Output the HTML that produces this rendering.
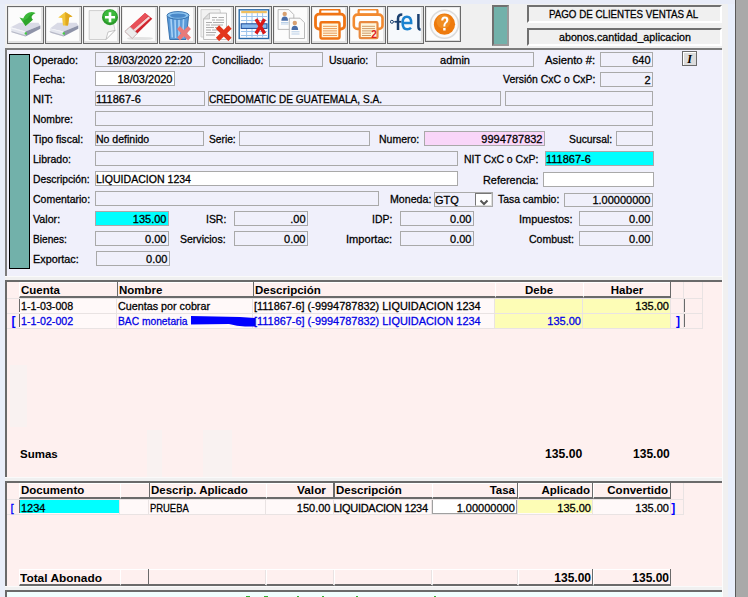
<!DOCTYPE html><html><head><meta charset="utf-8"><style>
html,body{margin:0;padding:0;}
body{width:748px;height:597px;position:relative;overflow:hidden;background:#e9eef9;font-family:"Liberation Sans",sans-serif;color:#000;}
div{box-sizing:content-box;}
</style></head><body>
<div style="position:absolute;left:722px;top:0px;width:6px;height:597px;background:#f0f0f0;"></div>
<div style="position:absolute;left:722px;top:50px;width:1px;height:547px;background:#fcfcfc;"></div>
<div style="position:absolute;left:728px;top:0px;width:7px;height:597px;background:#e9effc;"></div>
<div style="position:absolute;left:735px;top:0px;width:1px;height:597px;background:#5a5a5a;"></div>
<div style="position:absolute;left:736px;top:0px;width:12px;height:597px;background:#a9a9a9;"></div>
<div style="position:absolute;left:0px;top:0px;width:735px;height:4px;background:#e8ecf8;"></div>
<div style="position:absolute;left:5px;top:4px;width:717px;height:44px;background:#f0f0f0;"></div>
<div style="position:absolute;left:7px;top:6px;width:35px;height:36px;border:1px solid #6a6a6a;background:#fcfcfc;box-shadow:inset -2px -2px 0 #e2e2e2, inset 1px 1px 0 #ececec;"></div>
<svg style="position:absolute;left:10px;top:9px" width="32" height="32" viewBox="0 0 32 32"><path d="M0.7 18.2 L9.5 13.8 L28.5 13.8 L30.3 16.4 L15.5 22.4 Z" fill="#d9dae6"/>
<path d="M0.7 18.2 L15.5 22.4 L15.5 27.6 L1.6 23.3 Z" fill="#e4e6ee"/>
<path d="M0.7 18.2 L15.5 22.4 L15.5 23.6 L0.9 19.5 Z" fill="#f6f6fa"/>
<path d="M15.5 22.4 L30.3 16.4 L30.3 19.7 L15.5 27.6 Z" fill="#8e93a8"/>
<path d="M1.6 23.3 L15.5 27.6 L15.5 26.3 L1.4 22 Z" fill="#b8bac8"/>
<circle cx="15.8" cy="24.4" r="1.2" fill="#40d040"/><path d="M15.5 17 L9.5 8.5 L13.2 9.6 Q15 5 19 3.5 Q22 2.5 25.5 4 Q22.5 5 21.5 7.5 Q21 9 22.8 10.8 Z" fill="#3cb83a"/>
<path d="M15.5 17 L13 12 L18 9 Q19 6 23 4.5 L25.5 4 Q22.5 5 21.5 7.5 Q21 9 22.8 10.8 Z" fill="#22961e" opacity="0.6"/></svg>
<div style="position:absolute;left:45px;top:6px;width:35px;height:36px;border:1px solid #6a6a6a;background:#fcfcfc;box-shadow:inset -2px -2px 0 #e2e2e2, inset 1px 1px 0 #ececec;"></div>
<svg style="position:absolute;left:48px;top:9px" width="32" height="32" viewBox="0 0 32 32"><path d="M2 19.4 L9.5 13.8 L28.5 13.8 L30.3 16.4 L15.5 22.4 Z" fill="#d9dae6"/>
<path d="M2 19.4 L15.5 22.4 L15.5 27.6 L2.6 23.8 Z" fill="#e4e6ee"/>
<path d="M2 19.4 L15.5 22.4 L15.5 23.6 L0.9 19.5 Z" fill="#f6f6fa"/>
<path d="M15.5 22.4 L30.3 16.4 L30.3 19.7 L15.5 27.6 Z" fill="#8e93a8"/>
<path d="M2.6 23.8 L15.5 27.6 L15.5 26.3 L1.4 22 Z" fill="#b8bac8"/>
<circle cx="15.8" cy="24.4" r="1.2" fill="#40d040"/><path d="M17.3 3 L24.5 7.4 L21.2 8.2 L20 16.5 L15 16.5 L14.2 9 L10.2 8.6 Z" fill="#f2c53a"/>
<path d="M17.3 3 L24.5 7.4 L21.2 8.2 L20 16.5 L17.5 16.5 L17.3 8 Z" fill="#e0a820"/></svg>
<div style="position:absolute;left:83px;top:6px;width:35px;height:36px;border:1px solid #6a6a6a;background:#fcfcfc;box-shadow:inset -2px -2px 0 #e2e2e2, inset 1px 1px 0 #ececec;"></div>
<svg style="position:absolute;left:86px;top:9px" width="32" height="32" viewBox="0 0 32 32"><path d="M3.2 1.6 L25 1.6 L29 21.4 L20 30.5 L3.2 30.5 Z" fill="#f2f2f2" stroke="#c4c4c4" stroke-width="0.8"/>
<path d="M20 30.5 L22 23 L29 21.4 Z" fill="#fff" stroke="#b0b0b0" stroke-width="0.7"/>
<circle cx="24" cy="8.2" r="8" fill="#2a9a2a"/>
<circle cx="24" cy="7.2" r="6.5" fill="#3cb83c"/>
<path d="M24 3.2 V13.2 M19 8.2 H29" stroke="#fff" stroke-width="2.6"/></svg>
<div style="position:absolute;left:121px;top:6px;width:35px;height:36px;border:1px solid #6a6a6a;background:#fcfcfc;box-shadow:inset -2px -2px 0 #e2e2e2, inset 1px 1px 0 #ececec;"></div>
<svg style="position:absolute;left:124px;top:9px" width="32" height="32" viewBox="0 0 32 32"><ellipse cx="16" cy="29.5" rx="13" ry="1.6" fill="#e2e2e2"/>
<path d="M0.8 22.5 L21 4 L28.3 9.8 L8.2 29.5 Z" fill="#d0242c"/>
<path d="M3.5 20 L21 4 L24.5 6.8 L6.5 23.6 Z" fill="#e85058"/>
<path d="M6 23.8 L24.5 7.5 L26.2 9 L7.6 25.6 Z" fill="#f4d8d8"/>
<path d="M0.8 22.5 L6 17.8 L13.3 24.5 L8.2 29.5 Z" fill="#ececec" stroke="#b8b8b8" stroke-width="0.7"/></svg>
<div style="position:absolute;left:159px;top:6px;width:35px;height:36px;border:1px solid #6a6a6a;background:#fcfcfc;box-shadow:inset -2px -2px 0 #e2e2e2, inset 1px 1px 0 #ececec;"></div>
<svg style="position:absolute;left:162px;top:9px" width="32" height="32" viewBox="0 0 32 32"><path d="M5.2 7.2 L26.6 7.2 L24 30.5 L7.8 30.5 Z" fill="#5a9ad8" stroke="#2f6aa8" stroke-width="0.9"/>
<path d="M9 10 L10.3 28.5 M13 10.5 L13.6 29 M17 10.5 L17 29 M21.5 10 L20.8 28.5" stroke="#a8d2f6" stroke-width="1.6"/>
<ellipse cx="16" cy="6.4" rx="11" ry="3.8" fill="#8cc4f0" stroke="#2f6aa8" stroke-width="0.9"/>
<ellipse cx="16" cy="6.6" rx="8" ry="2.2" fill="#4a88c8"/>
<path d="M16.5 18.5 L27.5 30 M27.5 18.5 L16.5 30" stroke="#e87a78" stroke-width="4"/></svg>
<div style="position:absolute;left:197px;top:6px;width:35px;height:36px;border:1px solid #6a6a6a;background:#fcfcfc;box-shadow:inset -2px -2px 0 #e2e2e2, inset 1px 1px 0 #ececec;"></div>
<svg style="position:absolute;left:200px;top:9px" width="32" height="32" viewBox="0 0 32 32"><path d="M1 0.6 L20 0.6 L23 28 L1 28 Z" fill="#f2f2f2" stroke="#c8c8c8" stroke-width="0.8"/>
<path d="M9.5 4.1 L26.5 4.1 L26.5 30.5 L3.6 30.5 L3.6 10 Z" fill="#fbfbfb" stroke="#b0b0b0" stroke-width="0.8"/>
<path d="M3.6 10 L9.5 10 L9.5 4.1 Z" fill="#e0e0e0" stroke="#b0b0b0" stroke-width="0.6"/>
<path d="M12 8.5 H17 M18.5 8.5 H24 M12 11 H15 M16 11 H24 M6 13.5 H12 M13 13.5 H24 M6 16 H10 M11 16 H23 M6 18.5 H14 M15 18.5 H20 M6 21 H11 M12 21 H18 M6 23.5 H16 M6 26 H15" stroke="#9a9a9a" stroke-width="0.8"/>
<path d="M17.5 18 L30 30.5 M30 18 L17.5 30.5" stroke="#e2361c" stroke-width="4.6"/></svg>
<div style="position:absolute;left:235px;top:6px;width:35px;height:36px;border:1px solid #6a6a6a;background:#fcfcfc;box-shadow:inset -2px -2px 0 #e2e2e2, inset 1px 1px 0 #ececec;"></div>
<svg style="position:absolute;left:238px;top:9px" width="32" height="32" viewBox="0 0 32 32"><rect x="1.2" y="0.8" width="29.4" height="28.7" fill="#fafcff" stroke="#2a6aa8" stroke-width="1.4"/>
<rect x="3.2" y="2" width="25.6" height="2.2" fill="#f0c060"/>
<path d="M3 7.5 H29 M3 11.5 H29 M3 22.5 H29 M3 26.5 H29 M8.6 4 V28.5 M14 4 V28.5 M19.4 4 V28.5 M24.6 4 V28.5" stroke="#9cc4ec" stroke-width="1"/>
<rect x="3.2" y="14.8" width="25.8" height="4.6" fill="#88b8ee" stroke="#1a4a98" stroke-width="1"/>
<path d="M18 10.2 L26.6 24.5 M26.6 10.2 L18 24.5" stroke="#d81818" stroke-width="3.4"/></svg>
<div style="position:absolute;left:273px;top:6px;width:35px;height:36px;border:1px solid #6a6a6a;background:#fcfcfc;box-shadow:inset -2px -2px 0 #e2e2e2, inset 1px 1px 0 #ececec;"></div>
<svg style="position:absolute;left:276px;top:9px" width="32" height="32" viewBox="0 0 32 32"><path d="M2.1 0.6 L12.8 0.6 L17.8 5.6 L17.8 20.4 L2.1 20.4 Z" fill="#fcfcfc" stroke="#a8a8a8" stroke-width="0.8"/>
<circle cx="8.7" cy="4.9" r="2.2" fill="#d8a070"/>
<path d="M5.4 11.8 Q5.4 7.6 8.7 7.6 Q12 7.6 12 11.8 Z" fill="#4a6ea8"/>
<path d="M5 13.5 H12.5 M5 15 H12.5" stroke="#8ab0d8" stroke-width="0.6"/>
<path d="M13.3 9.2 L24 9.2 L28.5 13.7 L28.5 29.5 L13.3 29.5 Z" fill="#fcfcfc" stroke="#a8a8a8" stroke-width="0.8"/>
<circle cx="18.8" cy="14" r="2.2" fill="#d8a070"/>
<path d="M15.5 20.9 Q15.5 16.7 18.8 16.7 Q22.1 16.7 22.1 20.9 Z" fill="#4a6ea8"/>
<path d="M15.5 22.8 H23.5 M15.5 25 H23.5" stroke="#8ab0d8" stroke-width="0.6"/></svg>
<div style="position:absolute;left:311px;top:6px;width:35px;height:36px;border:1px solid #6a6a6a;background:#fcfcfc;box-shadow:inset -2px -2px 0 #e2e2e2, inset 1px 1px 0 #ececec;"></div>
<svg style="position:absolute;left:314px;top:9px" width="32" height="32" viewBox="0 0 32 32"><rect x="6.2" y="0.5" width="19.4" height="5" rx="1.5" fill="#fff" stroke="#f07414" stroke-width="2.2"/>
<rect x="1.5" y="5.2" width="29" height="14.8" rx="3.5" fill="#fff" stroke="#f07414" stroke-width="2.8"/>
<rect x="6.5" y="13.2" width="19" height="16.3" rx="1.2" fill="#fff6dc" stroke="#f07414" stroke-width="2.4"/>
<path d="M9 17.3 H23 M9 19.6 H23 M9 21.9 H23 M9 24.2 H23 M9 26.5 H23" stroke="#e8904a" stroke-width="0.9"/></svg>
<div style="position:absolute;left:349px;top:6px;width:35px;height:36px;border:1px solid #6a6a6a;background:#fcfcfc;box-shadow:inset -2px -2px 0 #e2e2e2, inset 1px 1px 0 #ececec;"></div>
<svg style="position:absolute;left:352px;top:9px" width="32" height="32" viewBox="0 0 32 32"><rect x="6.6" y="0.5" width="18.9" height="5" rx="1.5" fill="#fff" stroke="#f28a30" stroke-width="2.2"/>
<rect x="1.8" y="5.6" width="28.7" height="14.3" rx="3.5" fill="#fff" stroke="#f28a30" stroke-width="2.6"/>
<rect x="7.7" y="13.2" width="17.8" height="16" rx="1.2" fill="#fff6dc" stroke="#e88a40" stroke-width="2.2"/>
<path d="M10 17.3 H23 M10 19.6 H23 M10 21.9 H23 M10 24.2 H19 M10 26.5 H19" stroke="#c8905a" stroke-width="0.9"/>
<text x="19.2" y="29.4" font-family="Liberation Sans" font-size="10" font-weight="bold" fill="#e02020">2</text></svg>
<div style="position:absolute;left:387px;top:6px;width:35px;height:36px;border:1px solid #6a6a6a;background:#f6f9fc;box-shadow:inset -2px -2px 0 #e2e2e2, inset 1px 1px 0 #ececec;"></div>
<svg style="position:absolute;left:390px;top:9px" width="32" height="32" viewBox="0 0 32 32"><circle cx="1.9" cy="12.8" r="1.5" fill="none" stroke="#1a4070" stroke-width="1"/>
<path d="M3.4 12.8 H5" stroke="#1a4070" stroke-width="1"/>
<path d="M8 21 V9.5 Q8 5.4 12.3 5.4" fill="none" stroke="#1a4070" stroke-width="2.5"/>
<path d="M5 12.8 H11.5" stroke="#1a4070" stroke-width="1.8"/>
<path d="M13.2 14 H21.2 Q21.2 7.8 16.9 7.8 Q12.6 7.8 12.6 14 Q12.6 20.2 17.2 20.2 Q19.8 20.2 21 18.8" fill="none" stroke="#1a82d0" stroke-width="2.5"/>
<path d="M28.4 5 V17.8 Q28.4 20.6 30.6 20.8" fill="none" stroke="#1a4070" stroke-width="2.5"/></svg>
<div style="position:absolute;left:425px;top:6px;width:34px;height:34px;border:1px solid #6a6a6a;background:#fcfcfc;box-shadow:inset -1px -1px 0 #dcdcdc, inset 1px 1px 0 #e8e8e8;"></div>
<svg style="position:absolute;left:428px;top:9px" width="32" height="32" viewBox="0 0 32 32"><circle cx="16.5" cy="15.2" r="14" fill="#fafafa" stroke="#dcdcdc" stroke-width="1.6"/>
<circle cx="16.5" cy="15.2" r="10.6" fill="#ee7a0c"/>
<circle cx="15.5" cy="12.5" r="7" fill="#f49a30" opacity="0.6"/>
<path d="M13.2 11.6 Q13.2 7.6 16.8 7.6 Q20.4 7.6 20.4 11 Q20.4 13.2 18.2 14.4 Q17.3 15 17.3 17.6 L15.3 17.6 Q15.3 14.3 16.8 13.2 Q18.2 12.2 18.2 11 Q18.2 9.6 16.8 9.6 Q15.3 9.6 15.3 11.6 Z" fill="#fff"/>
<rect x="15.2" y="19" width="2.4" height="2.5" fill="#fff"/></svg>
<div style="position:absolute;left:492px;top:5px;width:13px;height:37px;border:2px solid #707070;border-right-color:#9a9a9a;border-bottom-color:#9a9a9a;background:#72b1aa;"></div>
<div style="position:absolute;left:527px;top:5px;width:191px;height:14px;border:2px solid #707070;border-right-color:#fff;border-bottom-color:#fff;background:#f0f0f0;"></div>
<div style="position:absolute;left:527px;top:28px;width:191px;height:14px;border:2px solid #707070;border-right-color:#fff;border-bottom-color:#fff;background:#f0f0f0;"></div>
<div id="t0" style="position:absolute;top:6.99px;line-height:14px;font-size:11px;white-space:pre;-webkit-text-stroke:0.28px currentColor;left:549.4px;transform:scaleX(0.8864);transform-origin:0 0;">PAGO DE CLIENTES VENTAS AL</div>
<div id="t1" style="position:absolute;top:29.99px;line-height:14px;font-size:11px;white-space:pre;-webkit-text-stroke:0.28px currentColor;left:558.5px;transform:scaleX(0.9714);transform-origin:0 0;">abonos.cantidad_aplicacion</div>
<div style="position:absolute;left:5px;top:48px;width:717px;height:228px;background:#f0f0fb;"></div>
<div style="position:absolute;left:5px;top:48px;width:717px;height:2px;background:#7c7c7c;"></div>
<div style="position:absolute;left:5px;top:48px;width:2px;height:228px;background:#7c7c7c;"></div>
<div style="position:absolute;left:5px;top:276px;width:717px;height:4px;background:#f0f0f0;"></div>
<div style="position:absolute;left:5px;top:276px;width:717px;height:1px;background:#fafafa;"></div>
<div style="position:absolute;left:9px;top:54px;width:21px;height:215px;background:#72b1aa;border:1px solid #000;box-sizing:border-box;"></div>
<div id="t2" style="position:absolute;top:52.89px;line-height:14px;font-size:11px;white-space:pre;-webkit-text-stroke:0.28px currentColor;left:32.8px;transform:scaleX(0.9831);transform-origin:0 0;">Operado:</div>
<div id="t3" style="position:absolute;top:72.09px;line-height:14px;font-size:11px;white-space:pre;-webkit-text-stroke:0.28px currentColor;left:32.8px;transform:scaleX(0.9542);transform-origin:0 0;">Fecha:</div>
<div id="t4" style="position:absolute;top:91.79px;line-height:14px;font-size:11px;white-space:pre;-webkit-text-stroke:0.28px currentColor;left:32.8px;transform:scaleX(1.0224);transform-origin:0 0;">NIT:</div>
<div id="t5" style="position:absolute;top:111.59px;line-height:14px;font-size:11px;white-space:pre;-webkit-text-stroke:0.28px currentColor;left:32.8px;transform:scaleX(0.9458);transform-origin:0 0;">Nombre:</div>
<div id="t6" style="position:absolute;top:132.49px;line-height:14px;font-size:11px;white-space:pre;-webkit-text-stroke:0.28px currentColor;left:32.8px;transform:scaleX(0.9603);transform-origin:0 0;">Tipo fiscal:</div>
<div id="t7" style="position:absolute;top:152.39px;line-height:14px;font-size:11px;white-space:pre;-webkit-text-stroke:0.28px currentColor;left:32.8px;transform:scaleX(0.9556);transform-origin:0 0;">Librado:</div>
<div id="t8" style="position:absolute;top:172.19px;line-height:14px;font-size:11px;white-space:pre;-webkit-text-stroke:0.28px currentColor;left:32.8px;transform:scaleX(0.9367);transform-origin:0 0;">Descripción:</div>
<div id="t9" style="position:absolute;top:192.19px;line-height:14px;font-size:11px;white-space:pre;-webkit-text-stroke:0.28px currentColor;left:32.8px;transform:scaleX(0.9529);transform-origin:0 0;">Comentario:</div>
<div id="t10" style="position:absolute;top:212.39px;line-height:14px;font-size:11px;white-space:pre;-webkit-text-stroke:0.28px currentColor;left:32.8px;transform:scaleX(0.9706);transform-origin:0 0;">Valor:</div>
<div id="t11" style="position:absolute;top:232.39px;line-height:14px;font-size:11px;white-space:pre;-webkit-text-stroke:0.28px currentColor;left:32.8px;transform:scaleX(0.9236);transform-origin:0 0;">Bienes:</div>
<div id="t12" style="position:absolute;top:252.29px;line-height:14px;font-size:11px;white-space:pre;-webkit-text-stroke:0.28px currentColor;left:32.8px;transform:scaleX(0.9856);transform-origin:0 0;">Exportac:</div>
<div style="position:absolute;left:95px;top:52px;width:108px;height:13px;border:1px solid #a9a9a9;background:#f0f0fb;"></div>
<div id="t13" style="position:absolute;top:52.79px;line-height:14px;font-size:11px;white-space:pre;-webkit-text-stroke:0.28px currentColor;left:106.8px;transform:scaleX(0.9937);transform-origin:0 0;color:#000">18/03/2020 22:20</div>
<div id="t14" style="position:absolute;top:52.89px;line-height:14px;font-size:11px;white-space:pre;-webkit-text-stroke:0.28px currentColor;left:211.6px;transform:scaleX(0.9426);transform-origin:0 0;">Conciliado:</div>
<div style="position:absolute;left:269px;top:52px;width:52px;height:13px;border:1px solid #a9a9a9;background:#f0f0fb;"></div>
<div id="t15" style="position:absolute;top:52.89px;line-height:14px;font-size:11px;white-space:pre;-webkit-text-stroke:0.28px currentColor;left:329.4px;transform:scaleX(0.9593);transform-origin:0 0;">Usuario:</div>
<div style="position:absolute;left:376px;top:52px;width:156px;height:13px;border:1px solid #a9a9a9;background:#f0f0fb;"></div>
<div id="t16" style="position:absolute;top:52.79px;line-height:14px;font-size:11px;white-space:pre;-webkit-text-stroke:0.28px currentColor;left:305.0px;width:300px;text-align:center;color:#000">admin</div>
<div id="t17" style="position:absolute;top:52.89px;line-height:14px;font-size:11px;white-space:pre;-webkit-text-stroke:0.28px currentColor;left:545px;transform:scaleX(1.0261);transform-origin:0 0;">Asiento #:</div>
<div style="position:absolute;left:600px;top:52px;width:51px;height:13px;border:1px solid #a9a9a9;background:#f0f0fb;"></div>
<div id="t18" style="position:absolute;top:52.79px;line-height:14px;font-size:11px;white-space:pre;-webkit-text-stroke:0.28px currentColor;right:97.5px;color:#000">640</div>
<div style="position:absolute;left:682px;top:51px;width:13px;height:13px;border:1px solid #6a6a6a;background:#dcdcdc;box-shadow:inset 1px 1px 0 #fff;"></div>
<div style="position:absolute;left:682px;top:51px;width:15px;text-align:center;font-family:'Liberation Serif',serif;font-style:italic;font-weight:bold;font-size:12px;line-height:16px;">I</div>
<div style="position:absolute;left:95px;top:71px;width:78px;height:13px;border:1px solid #a9a9a9;background:#fff;"></div>
<div id="t19" style="position:absolute;top:71.79px;line-height:14px;font-size:11px;white-space:pre;-webkit-text-stroke:0.28px currentColor;right:575.5px;color:#000">18/03/2020</div>
<div id="t20" style="position:absolute;top:72.19px;line-height:14px;font-size:11px;white-space:pre;-webkit-text-stroke:0.28px currentColor;left:502.9px;transform:scaleX(0.9496);transform-origin:0 0;">Versión CxC o CxP:</div>
<div style="position:absolute;left:600px;top:72px;width:51px;height:13px;border:1px solid #a9a9a9;background:#f0f0fb;"></div>
<div id="t21" style="position:absolute;top:72.79px;line-height:14px;font-size:11px;white-space:pre;-webkit-text-stroke:0.28px currentColor;right:97.5px;color:#000">2</div>
<div style="position:absolute;left:95px;top:91px;width:108px;height:13px;border:1px solid #a9a9a9;background:#f0f0fb;"></div>
<div id="t22" style="position:absolute;top:91.79px;line-height:14px;font-size:11px;white-space:pre;-webkit-text-stroke:0.28px currentColor;left:96px;color:#000">111867-6</div>
<div style="position:absolute;left:208px;top:91px;width:291px;height:13px;border:1px solid #a9a9a9;background:#f0f0fb;"></div>
<div id="t23" style="position:absolute;top:91.79px;line-height:14px;font-size:11px;white-space:pre;-webkit-text-stroke:0.28px currentColor;left:208.8px;transform:scaleX(0.9180);transform-origin:0 0;color:#000">CREDOMATIC DE GUATEMALA, S.A.</div>
<div style="position:absolute;left:505px;top:91px;width:146px;height:13px;border:1px solid #a9a9a9;background:#f0f0fb;"></div>
<div style="position:absolute;left:95px;top:111px;width:556px;height:13px;border:1px solid #a9a9a9;background:#f0f0fb;"></div>
<div style="position:absolute;left:95px;top:131px;width:107px;height:13px;border:1px solid #a9a9a9;background:#f0f0fb;"></div>
<div id="t24" style="position:absolute;top:131.79px;line-height:14px;font-size:11px;white-space:pre;-webkit-text-stroke:0.28px currentColor;left:95.8px;transform:scaleX(0.9559);transform-origin:0 0;color:#000">No definido</div>
<div id="t25" style="position:absolute;top:132.19px;line-height:14px;font-size:11px;white-space:pre;-webkit-text-stroke:0.28px currentColor;left:208.6px;transform:scaleX(0.9287);transform-origin:0 0;">Serie:</div>
<div style="position:absolute;left:239px;top:131px;width:129px;height:13px;border:1px solid #a9a9a9;background:#f0f0fb;"></div>
<div id="t26" style="position:absolute;top:132.19px;line-height:14px;font-size:11px;white-space:pre;-webkit-text-stroke:0.28px currentColor;left:378.8px;transform:scaleX(0.9529);transform-origin:0 0;">Numero:</div>
<div style="position:absolute;left:424px;top:131px;width:119px;height:13px;border:1px solid #a9a9a9;background:#f9d6f9;"></div>
<div id="t27" style="position:absolute;top:131.79px;line-height:14px;font-size:11px;white-space:pre;-webkit-text-stroke:0.28px currentColor;right:205.5px;color:#000">9994787832</div>
<div id="t28" style="position:absolute;top:132.19px;line-height:14px;font-size:11px;white-space:pre;-webkit-text-stroke:0.28px currentColor;left:568.6px;transform:scaleX(0.9398);transform-origin:0 0;">Sucursal:</div>
<div style="position:absolute;left:616px;top:131px;width:35px;height:13px;border:1px solid #a9a9a9;background:#f0f0fb;"></div>
<div style="position:absolute;left:95px;top:151px;width:361px;height:13px;border:1px solid #a9a9a9;background:#f0f0fb;"></div>
<div id="t29" style="position:absolute;top:152.19px;line-height:14px;font-size:11px;white-space:pre;-webkit-text-stroke:0.28px currentColor;left:463.6px;transform:scaleX(0.9522);transform-origin:0 0;">NIT CxC o CxP:</div>
<div style="position:absolute;left:545px;top:151px;width:107px;height:13px;border:1px solid #a9a9a9;background:#00ffff;"></div>
<div id="t30" style="position:absolute;top:151.79px;line-height:14px;font-size:11px;white-space:pre;-webkit-text-stroke:0.28px currentColor;left:546px;color:#000">111867-6</div>
<div style="position:absolute;left:95px;top:171px;width:361px;height:13px;border:1px solid #a9a9a9;background:#fff;"></div>
<div id="t31" style="position:absolute;top:171.79px;line-height:14px;font-size:11px;white-space:pre;-webkit-text-stroke:0.28px currentColor;left:95.8px;transform:scaleX(0.9591);transform-origin:0 0;color:#000">LIQUIDACION 1234</div>
<div id="t32" style="position:absolute;top:172.69px;line-height:14px;font-size:11px;white-space:pre;-webkit-text-stroke:0.28px currentColor;left:482.6px;transform:scaleX(0.9882);transform-origin:0 0;">Referencia:</div>
<div style="position:absolute;left:543px;top:172px;width:109px;height:13px;border:1px solid #a9a9a9;background:#fff;"></div>
<div style="position:absolute;left:95px;top:191px;width:282px;height:13px;border:1px solid #a9a9a9;background:#f0f0fb;"></div>
<div id="t33" style="position:absolute;top:192.19px;line-height:14px;font-size:11px;white-space:pre;-webkit-text-stroke:0.28px currentColor;left:389.6px;transform:scaleX(0.9670);transform-origin:0 0;">Moneda:</div>
<div style="position:absolute;left:434px;top:192px;width:57px;height:13px;border:1px solid #a9a9a9;background:#f0f0fb;"></div>
<div id="t34" style="position:absolute;top:192.79px;line-height:14px;font-size:11px;white-space:pre;-webkit-text-stroke:0.28px currentColor;left:435px;color:#000">GTQ</div>
<div style="position:absolute;left:475px;top:193px;width:15px;height:11px;border:1px solid #777;border-right-color:#ddd;border-bottom-color:#ddd;background:#fff;"></div>
<svg style="position:absolute;left:476px;top:194px" width="16" height="12"><path d="M4.5 6.5 L8 10 L11.5 6.5" fill="none" stroke="#555" stroke-width="2"/></svg>
<div id="t35" style="position:absolute;top:192.19px;line-height:14px;font-size:11px;white-space:pre;-webkit-text-stroke:0.28px currentColor;left:498.2px;transform:scaleX(0.9458);transform-origin:0 0;">Tasa cambio:</div>
<div style="position:absolute;left:564px;top:193px;width:87px;height:12px;border:1px solid #a9a9a9;background:#f0f0fb;"></div>
<div id="t36" style="position:absolute;top:192.99px;line-height:14px;font-size:11px;white-space:pre;-webkit-text-stroke:0.28px currentColor;right:97.5px;color:#000">1.00000000</div>
<div style="position:absolute;left:95px;top:211px;width:72px;height:13px;border:1px solid #a9a9a9;background:#00ffff;"></div>
<div id="t37" style="position:absolute;top:211.79px;line-height:14px;font-size:11px;white-space:pre;-webkit-text-stroke:0.28px currentColor;right:581.5px;color:#000">135.00</div>
<div id="t38" style="position:absolute;top:212.19px;line-height:14px;font-size:11px;white-space:pre;-webkit-text-stroke:0.28px currentColor;left:205.7px;transform:scaleX(0.9483);transform-origin:0 0;">ISR:</div>
<div style="position:absolute;left:234px;top:211px;width:72px;height:13px;border:1px solid #a9a9a9;background:#f0f0fb;"></div>
<div id="t39" style="position:absolute;top:211.79px;line-height:14px;font-size:11px;white-space:pre;-webkit-text-stroke:0.28px currentColor;right:442.5px;color:#000">.00</div>
<div id="t40" style="position:absolute;top:211.69px;line-height:14px;font-size:11px;white-space:pre;-webkit-text-stroke:0.28px currentColor;left:372.3px;transform:scaleX(0.9483);transform-origin:0 0;">IDP:</div>
<div style="position:absolute;left:400px;top:211px;width:72px;height:13px;border:1px solid #a9a9a9;background:#f0f0fb;"></div>
<div id="t41" style="position:absolute;top:211.79px;line-height:14px;font-size:11px;white-space:pre;-webkit-text-stroke:0.28px currentColor;right:276.5px;color:#000">0.00</div>
<div id="t42" style="position:absolute;top:212.19px;line-height:14px;font-size:11px;white-space:pre;-webkit-text-stroke:0.28px currentColor;left:519.4px;transform:scaleX(0.9961);transform-origin:0 0;">Impuestos:</div>
<div style="position:absolute;left:579px;top:211px;width:72px;height:13px;border:1px solid #a9a9a9;background:#f0f0fb;"></div>
<div id="t43" style="position:absolute;top:211.79px;line-height:14px;font-size:11px;white-space:pre;-webkit-text-stroke:0.28px currentColor;right:97.5px;color:#000">0.00</div>
<div style="position:absolute;left:95px;top:231px;width:72px;height:13px;border:1px solid #a9a9a9;background:#f0f0fb;"></div>
<div id="t44" style="position:absolute;top:231.79px;line-height:14px;font-size:11px;white-space:pre;-webkit-text-stroke:0.28px currentColor;right:581.5px;color:#000">0.00</div>
<div id="t45" style="position:absolute;top:231.69px;line-height:14px;font-size:11px;white-space:pre;-webkit-text-stroke:0.28px currentColor;left:180.4px;transform:scaleX(0.9562);transform-origin:0 0;">Servicios:</div>
<div style="position:absolute;left:234px;top:231px;width:72px;height:13px;border:1px solid #a9a9a9;background:#f0f0fb;"></div>
<div id="t46" style="position:absolute;top:231.79px;line-height:14px;font-size:11px;white-space:pre;-webkit-text-stroke:0.28px currentColor;right:442.5px;color:#000">0.00</div>
<div id="t47" style="position:absolute;top:232.19px;line-height:14px;font-size:11px;white-space:pre;-webkit-text-stroke:0.28px currentColor;left:346.4px;transform:scaleX(1.0074);transform-origin:0 0;">Importac:</div>
<div style="position:absolute;left:400px;top:231px;width:72px;height:13px;border:1px solid #a9a9a9;background:#f0f0fb;"></div>
<div id="t48" style="position:absolute;top:231.79px;line-height:14px;font-size:11px;white-space:pre;-webkit-text-stroke:0.28px currentColor;right:276.5px;color:#000">0.00</div>
<div id="t49" style="position:absolute;top:232.19px;line-height:14px;font-size:11px;white-space:pre;-webkit-text-stroke:0.28px currentColor;left:528.7px;transform:scaleX(0.9537);transform-origin:0 0;">Combust:</div>
<div style="position:absolute;left:579px;top:231px;width:72px;height:13px;border:1px solid #a9a9a9;background:#f0f0fb;"></div>
<div id="t50" style="position:absolute;top:231.79px;line-height:14px;font-size:11px;white-space:pre;-webkit-text-stroke:0.28px currentColor;right:97.5px;color:#000">0.00</div>
<div style="position:absolute;left:96px;top:251px;width:72px;height:13px;border:1px solid #a9a9a9;background:#f0f0fb;"></div>
<div id="t51" style="position:absolute;top:251.79px;line-height:14px;font-size:11px;white-space:pre;-webkit-text-stroke:0.28px currentColor;right:580.5px;color:#000">0.00</div>
<div style="position:absolute;left:5px;top:280px;width:717px;height:197px;background:#fef0ef;"></div>
<div style="position:absolute;left:5px;top:280px;width:717px;height:2px;background:#6a6a6a;"></div>
<div style="position:absolute;left:5px;top:280px;width:2px;height:197px;background:#6a6a6a;"></div>
<div style="position:absolute;left:19px;top:282px;width:98px;height:16px;box-sizing:border-box;border-top:1px solid #fff;border-left:1px solid #fff;border-bottom:2px solid #6a6a6a;"></div>
<div id="t52" style="position:absolute;top:282.52px;line-height:14px;font-size:11.5px;white-space:pre;font-weight:bold;left:21px;">Cuenta</div>
<div style="position:absolute;left:117px;top:282px;width:136px;height:16px;box-sizing:border-box;border-top:1px solid #fff;border-left:1px solid #fff;border-bottom:2px solid #6a6a6a;"></div>
<div style="position:absolute;left:117px;top:282px;width:1px;height:16px;background:#6a6a6a;"></div>
<div id="t53" style="position:absolute;top:282.52px;line-height:14px;font-size:11.5px;white-space:pre;font-weight:bold;left:119px;">Nombre</div>
<div style="position:absolute;left:253px;top:282px;width:242px;height:16px;box-sizing:border-box;border-top:1px solid #fff;border-left:1px solid #fff;border-bottom:2px solid #6a6a6a;"></div>
<div style="position:absolute;left:253px;top:282px;width:1px;height:16px;background:#6a6a6a;"></div>
<div id="t54" style="position:absolute;top:282.52px;line-height:14px;font-size:11.5px;white-space:pre;font-weight:bold;left:255px;">Descripción</div>
<div style="position:absolute;left:495px;top:282px;width:88px;height:16px;box-sizing:border-box;border-top:1px solid #fff;border-left:1px solid #fff;border-bottom:2px solid #6a6a6a;"></div>
<div id="t55" style="position:absolute;top:282.52px;line-height:14px;font-size:11.5px;white-space:pre;font-weight:bold;left:389.0px;width:300px;text-align:center;">Debe</div>
<div style="position:absolute;left:583px;top:282px;width:88px;height:16px;box-sizing:border-box;border-top:1px solid #fff;border-left:1px solid #fff;border-bottom:2px solid #6a6a6a;"></div>
<div id="t56" style="position:absolute;top:282.52px;line-height:14px;font-size:11.5px;white-space:pre;font-weight:bold;left:477.0px;width:300px;text-align:center;">Haber</div>
<div style="position:absolute;left:670px;top:282px;width:1px;height:16px;background:#6a6a6a;"></div>
<div style="position:absolute;left:19px;top:298px;width:476px;height:15px;background:#fff9f9;"></div>
<div style="position:absolute;left:495px;top:298px;width:87px;height:15px;background:#fdfdb6;"></div>
<div style="position:absolute;left:583px;top:298px;width:87px;height:15px;background:#fdfdb6;"></div>
<div style="position:absolute;left:19px;top:313px;width:476px;height:15px;background:#fff9f9;"></div>
<div style="position:absolute;left:495px;top:313px;width:87px;height:15px;background:#fdfdb6;"></div>
<div style="position:absolute;left:583px;top:313px;width:87px;height:15px;background:#fdfdb6;"></div>
<div style="position:absolute;left:7px;top:298px;width:696px;height:1px;background:#e9e3e3;"></div>
<div style="position:absolute;left:7px;top:313px;width:696px;height:1px;background:#e9e3e3;"></div>
<div style="position:absolute;left:7px;top:328px;width:696px;height:1px;background:#e9e3e3;"></div>
<div style="position:absolute;left:116px;top:298px;width:1px;height:30px;background:#e9e3e3;"></div>
<div style="position:absolute;left:252px;top:298px;width:1px;height:30px;background:#e9e3e3;"></div>
<div style="position:absolute;left:494px;top:298px;width:1px;height:30px;background:#e9e3e3;"></div>
<div style="position:absolute;left:582px;top:298px;width:1px;height:30px;background:#e9e3e3;"></div>
<div style="position:absolute;left:670px;top:298px;width:1px;height:30px;background:#e9e3e3;"></div>
<div style="position:absolute;left:683px;top:282px;width:1px;height:46px;background:#e9e3e3;"></div>
<div style="position:absolute;left:702px;top:282px;width:1px;height:46px;background:#e9e3e3;"></div>
<div style="position:absolute;left:19px;top:299px;width:1px;height:13px;background:#6a6a6a;"></div>
<div style="position:absolute;left:684px;top:299px;width:1px;height:13px;background:#6a6a6a;"></div>
<div style="position:absolute;left:19px;top:314px;width:1px;height:13px;background:#6a6a6a;"></div>
<div style="position:absolute;left:684px;top:314px;width:1px;height:13px;background:#6a6a6a;"></div>
<div id="t57" style="position:absolute;top:298.69px;line-height:14px;font-size:11px;white-space:pre;-webkit-text-stroke:0.28px currentColor;left:20.7px;transform:scaleX(0.9698);transform-origin:0 0;">1-1-03-008</div>
<div id="t58" style="position:absolute;top:298.69px;line-height:14px;font-size:11px;white-space:pre;-webkit-text-stroke:0.28px currentColor;left:118px;transform:scaleX(0.9769);transform-origin:0 0;">Cuentas por cobrar</div>
<div id="t59" style="position:absolute;top:298.69px;line-height:14px;font-size:11px;white-space:pre;-webkit-text-stroke:0.28px currentColor;left:254px;transform:scaleX(0.9926);transform-origin:0 0;">[111867-6] (-9994787832) LIQUIDACION 1234</div>
<div id="t60" style="position:absolute;top:298.69px;line-height:14px;font-size:11px;white-space:pre;-webkit-text-stroke:0.28px currentColor;right:79px;">135.00</div>
<div id="t61" style="position:absolute;top:314.14px;line-height:14px;font-size:12px;white-space:pre;font-weight:bold;left:11.6px;color:#0000ff;">[</div>
<div id="t62" style="position:absolute;top:313.69px;line-height:14px;font-size:11px;white-space:pre;-webkit-text-stroke:0.28px currentColor;left:20.7px;transform:scaleX(0.9698);transform-origin:0 0;color:#0000e6;">1-1-02-002</div>
<div id="t63" style="position:absolute;top:313.69px;line-height:14px;font-size:11px;white-space:pre;-webkit-text-stroke:0.28px currentColor;left:118px;transform:scaleX(0.9317);transform-origin:0 0;color:#0000e6;">BAC monetaria</div>
<svg style="position:absolute;left:185px;top:313px" width="75" height="16"><path d="M6 3 L55 4 L70 5 L70 13.5 L60 13.5 Q52 13 44 11 L6 11.5 Z" fill="#0000ff"/></svg>
<div id="t64" style="position:absolute;top:313.69px;line-height:14px;font-size:11px;white-space:pre;-webkit-text-stroke:0.28px currentColor;left:254px;transform:scaleX(0.9926);transform-origin:0 0;color:#0000e6;">[111867-6] (-9994787832) LIQUIDACION 1234</div>
<div id="t65" style="position:absolute;top:313.69px;line-height:14px;font-size:11px;white-space:pre;-webkit-text-stroke:0.28px currentColor;right:167px;color:#0000e6;">135.00</div>
<div id="t66" style="position:absolute;top:314.14px;line-height:14px;font-size:12px;white-space:pre;font-weight:bold;left:676px;color:#0000ff;">]</div>
<div style="position:absolute;left:10px;top:365px;width:17px;height:62px;background:#f9f2f1;"></div>
<div style="position:absolute;left:147px;top:430px;width:15px;height:47px;background:#f9f2f1;"></div>
<div style="position:absolute;left:203px;top:430px;width:29px;height:47px;background:#f9f2f1;"></div>
<div id="t67" style="position:absolute;top:447.02px;line-height:14px;font-size:11.5px;white-space:pre;font-weight:bold;left:20.1px;transform:scaleX(0.9995);transform-origin:0 0;">Sumas</div>
<div id="t68" style="position:absolute;top:446.84px;line-height:14px;font-size:12px;white-space:pre;font-weight:bold;left:544.5px;transform:scaleX(1.0163);transform-origin:0 0;">135.00</div>
<div id="t69" style="position:absolute;top:446.84px;line-height:14px;font-size:12px;white-space:pre;font-weight:bold;left:632.7px;transform:scaleX(1.0026);transform-origin:0 0;">135.00</div>
<div style="position:absolute;left:5px;top:477px;width:717px;height:4px;background:#f0f0f0;"></div>
<div style="position:absolute;left:5px;top:477px;width:717px;height:1px;background:#fafafa;"></div>
<div style="position:absolute;left:5px;top:481px;width:717px;height:105px;background:#fef0ef;"></div>
<div style="position:absolute;left:5px;top:481px;width:717px;height:2px;background:#6a6a6a;"></div>
<div style="position:absolute;left:5px;top:481px;width:2px;height:105px;background:#6a6a6a;"></div>
<div style="position:absolute;left:19px;top:483px;width:101px;height:16px;box-sizing:border-box;border-top:1px solid #fff;border-left:1px solid #fff;border-bottom:2px solid #6a6a6a;"></div>
<div id="t70" style="position:absolute;top:483.22px;line-height:14px;font-size:11.5px;white-space:pre;font-weight:bold;left:21px;">Documento</div>
<div style="position:absolute;left:120px;top:483px;width:29px;height:16px;box-sizing:border-box;border-top:1px solid #fff;border-left:1px solid #fff;border-bottom:2px solid #6a6a6a;"></div>
<div style="position:absolute;left:149px;top:483px;width:117px;height:16px;box-sizing:border-box;border-top:1px solid #fff;border-left:1px solid #fff;border-bottom:2px solid #6a6a6a;"></div>
<div style="position:absolute;left:149px;top:483px;width:1px;height:16px;background:#6a6a6a;"></div>
<div id="t71" style="position:absolute;top:483.22px;line-height:14px;font-size:11.5px;white-space:pre;font-weight:bold;left:151px;">Descrip. Aplicado</div>
<div style="position:absolute;left:266px;top:483px;width:68px;height:16px;box-sizing:border-box;border-top:1px solid #fff;border-left:1px solid #fff;border-bottom:2px solid #6a6a6a;"></div>
<div style="position:absolute;left:333px;top:483px;width:1px;height:16px;background:#6a6a6a;"></div>
<div id="t72" style="position:absolute;top:483.22px;line-height:14px;font-size:11.5px;white-space:pre;font-weight:bold;left:296.8px;transform:scaleX(1.0305);transform-origin:0 0;">Valor</div>
<div style="position:absolute;left:334px;top:483px;width:98px;height:16px;box-sizing:border-box;border-top:1px solid #fff;border-left:1px solid #fff;border-bottom:2px solid #6a6a6a;"></div>
<div style="position:absolute;left:334px;top:483px;width:1px;height:16px;background:#6a6a6a;"></div>
<div id="t73" style="position:absolute;top:483.22px;line-height:14px;font-size:11.5px;white-space:pre;font-weight:bold;left:336px;">Descripción</div>
<div style="position:absolute;left:432px;top:483px;width:86px;height:16px;box-sizing:border-box;border-top:1px solid #fff;border-left:1px solid #fff;border-bottom:2px solid #6a6a6a;"></div>
<div style="position:absolute;left:517px;top:483px;width:1px;height:16px;background:#6a6a6a;"></div>
<div id="t74" style="position:absolute;top:483.22px;line-height:14px;font-size:11.5px;white-space:pre;font-weight:bold;right:233px;">Tasa</div>
<div style="position:absolute;left:518px;top:483px;width:75px;height:16px;box-sizing:border-box;border-top:1px solid #fff;border-left:1px solid #fff;border-bottom:2px solid #6a6a6a;"></div>
<div style="position:absolute;left:592px;top:483px;width:1px;height:16px;background:#6a6a6a;"></div>
<div id="t75" style="position:absolute;top:483.22px;line-height:14px;font-size:11.5px;white-space:pre;font-weight:bold;right:158px;">Aplicado</div>
<div style="position:absolute;left:593px;top:483px;width:78px;height:16px;box-sizing:border-box;border-top:1px solid #fff;border-left:1px solid #fff;border-bottom:2px solid #6a6a6a;"></div>
<div style="position:absolute;left:670px;top:483px;width:1px;height:16px;background:#6a6a6a;"></div>
<div id="t76" style="position:absolute;top:483.22px;line-height:14px;font-size:11.5px;white-space:pre;font-weight:bold;right:80px;">Convertido</div>
<div style="position:absolute;left:19px;top:499px;width:652px;height:15px;background:#fff9f9;"></div>
<div style="position:absolute;left:20px;top:500px;width:99px;height:13px;background:#00ffff;"></div>
<div style="position:absolute;left:432px;top:499px;width:85px;height:15px;background:#fff;border:1px solid #a0a0a0;box-sizing:border-box;"></div>
<div style="position:absolute;left:518px;top:500px;width:74px;height:13px;background:#fdfdb6;"></div>
<div style="position:absolute;left:19px;top:500px;width:1px;height:13px;background:#6a6a6a;"></div>
<div style="position:absolute;left:7px;top:499px;width:677px;height:1px;background:#e9e3e3;"></div>
<div style="position:absolute;left:7px;top:514px;width:677px;height:1px;background:#e9e3e3;"></div>
<div style="position:absolute;left:119px;top:499px;width:1px;height:15px;background:#e9e3e3;"></div>
<div style="position:absolute;left:148px;top:499px;width:1px;height:15px;background:#e9e3e3;"></div>
<div style="position:absolute;left:265px;top:499px;width:1px;height:15px;background:#e9e3e3;"></div>
<div style="position:absolute;left:333px;top:499px;width:1px;height:15px;background:#e9e3e3;"></div>
<div style="position:absolute;left:431px;top:499px;width:1px;height:15px;background:#e9e3e3;"></div>
<div style="position:absolute;left:517px;top:499px;width:1px;height:15px;background:#e9e3e3;"></div>
<div style="position:absolute;left:592px;top:499px;width:1px;height:15px;background:#e9e3e3;"></div>
<div style="position:absolute;left:670px;top:499px;width:1px;height:15px;background:#e9e3e3;"></div>
<div style="position:absolute;left:683px;top:483px;width:1px;height:31px;background:#e9e3e3;"></div>
<div id="t77" style="position:absolute;top:501.02px;line-height:14px;font-size:11.5px;white-space:pre;-webkit-text-stroke:0.28px currentColor;left:10.6px;color:#0000ff;">[</div>
<div id="t78" style="position:absolute;top:500.69px;line-height:14px;font-size:11px;white-space:pre;-webkit-text-stroke:0.28px currentColor;left:21px;">1234</div>
<div id="t79" style="position:absolute;top:500.69px;line-height:14px;font-size:11px;white-space:pre;-webkit-text-stroke:0.28px currentColor;left:149.6px;transform:scaleX(0.8552);transform-origin:0 0;">PRUEBA</div>
<div id="t80" style="position:absolute;top:500.69px;line-height:14px;font-size:11px;white-space:pre;-webkit-text-stroke:0.28px currentColor;right:417.5px;">150.00</div>
<div id="t81" style="position:absolute;top:500.69px;line-height:14px;font-size:11px;white-space:pre;-webkit-text-stroke:0.28px currentColor;left:333.5px;letter-spacing:-0.3px;">LIQUIDACION 1234</div>
<div id="t82" style="position:absolute;top:500.69px;line-height:14px;font-size:11px;white-space:pre;-webkit-text-stroke:0.28px currentColor;right:233.20000000000005px;">1.00000000</div>
<div id="t83" style="position:absolute;top:500.69px;line-height:14px;font-size:11px;white-space:pre;-webkit-text-stroke:0.28px currentColor;right:157px;">135.00</div>
<div id="t84" style="position:absolute;top:500.69px;line-height:14px;font-size:11px;white-space:pre;-webkit-text-stroke:0.28px currentColor;right:79px;">135.00</div>
<div id="t85" style="position:absolute;top:501.14px;line-height:14px;font-size:12px;white-space:pre;font-weight:bold;left:671.3px;color:#0000ff;">]</div>
<div style="position:absolute;left:19px;top:569px;width:101px;height:17px;box-sizing:border-box;border-top:1px solid #fff;border-left:1px solid #fff;border-bottom:2px solid #6a6a6a;"></div>
<div style="position:absolute;left:120px;top:569px;width:28px;height:17px;box-sizing:border-box;border-top:1px solid #fff;border-left:1px solid #fff;border-bottom:2px solid #6a6a6a;"></div>
<div style="position:absolute;left:148px;top:569px;width:118px;height:17px;box-sizing:border-box;border-top:1px solid #fff;border-left:1px solid #fff;border-bottom:2px solid #6a6a6a;"></div>
<div style="position:absolute;left:266px;top:569px;width:68px;height:17px;box-sizing:border-box;border-top:1px solid #fff;border-left:1px solid #fff;border-bottom:2px solid #6a6a6a;"></div>
<div style="position:absolute;left:334px;top:569px;width:98px;height:17px;box-sizing:border-box;border-top:1px solid #fff;border-left:1px solid #fff;border-bottom:2px solid #6a6a6a;"></div>
<div style="position:absolute;left:432px;top:569px;width:86px;height:17px;box-sizing:border-box;border-top:1px solid #fff;border-left:1px solid #fff;border-bottom:2px solid #6a6a6a;"></div>
<div style="position:absolute;left:518px;top:569px;width:75px;height:17px;box-sizing:border-box;border-top:1px solid #fff;border-left:1px solid #fff;border-bottom:2px solid #6a6a6a;"></div>
<div style="position:absolute;left:593px;top:569px;width:78px;height:17px;box-sizing:border-box;border-top:1px solid #fff;border-left:1px solid #fff;border-bottom:2px solid #6a6a6a;"></div>
<div style="position:absolute;left:148px;top:569px;width:1px;height:17px;background:#6a6a6a;"></div>
<div style="position:absolute;left:592px;top:569px;width:1px;height:17px;background:#6a6a6a;"></div>
<div style="position:absolute;left:670px;top:569px;width:1px;height:17px;background:#6a6a6a;"></div>
<div style="position:absolute;left:265px;top:570px;width:1px;height:15px;background:#e9e3e3;"></div>
<div style="position:absolute;left:333px;top:570px;width:1px;height:15px;background:#e9e3e3;"></div>
<div style="position:absolute;left:431px;top:570px;width:1px;height:15px;background:#e9e3e3;"></div>
<div style="position:absolute;left:517px;top:570px;width:1px;height:15px;background:#e9e3e3;"></div>
<div id="t86" style="position:absolute;top:571.32px;line-height:14px;font-size:11.5px;white-space:pre;font-weight:bold;left:20px;transform:scaleX(1.0351);transform-origin:0 0;">Total Abonado</div>
<div id="t87" style="position:absolute;top:570.84px;line-height:14px;font-size:12px;white-space:pre;font-weight:bold;right:157px;">135.00</div>
<div id="t88" style="position:absolute;top:570.84px;line-height:14px;font-size:12px;white-space:pre;font-weight:bold;right:79px;">135.00</div>
<div style="position:absolute;left:5px;top:586px;width:717px;height:4px;background:#f0f0f0;"></div>
<div style="position:absolute;left:5px;top:586px;width:717px;height:1px;background:#fafafa;"></div>
<div style="position:absolute;left:5px;top:590px;width:717px;height:2px;background:#6a6a6a;"></div>
<div style="position:absolute;left:7px;top:592px;width:715px;height:5px;background:#f0fefe;"></div>
<div style="position:absolute;left:5px;top:590px;width:2px;height:7px;background:#6a6a6a;"></div>
<div style="position:absolute;left:246px;top:596px;width:4px;height:1px;background:#30b030;"></div>
<div style="position:absolute;left:264px;top:596px;width:4px;height:1px;background:#30b030;"></div>
<div style="position:absolute;left:297px;top:596px;width:2px;height:1px;background:#30b030;"></div>
<div style="position:absolute;left:322px;top:596px;width:2px;height:1px;background:#30b030;"></div>
<div style="position:absolute;left:356px;top:596px;width:2px;height:1px;background:#30b030;"></div>
<div style="position:absolute;left:434px;top:596px;width:2px;height:1px;background:#30b030;"></div>
</body></html>
